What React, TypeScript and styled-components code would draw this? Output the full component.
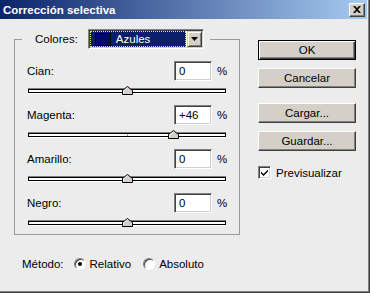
import styled, { createGlobalStyle } from "styled-components";

const GlobalStyle = createGlobalStyle`
  html, body {
    margin: 0;
    padding: 0;
    background: #ececec;
  }
  body {
    font-family: "Liberation Sans", Arial, sans-serif;
    font-size: 11.5px;
    color: #000;
  }
`;

const Window = styled.div`
  width: 370px;
  height: 293px;
  box-sizing: border-box;
  border-right: 1px solid #404040;
  border-bottom: 1px solid #404040;
  background: #ececec;
`;

const Frame = styled.div`
  height: 100%;
  box-sizing: border-box;
  border-right: 1px solid #808080;
  border-bottom: 1px solid #808080;
  padding-right: 1px;
  display: flex;
  flex-direction: column;
`;

const TitleBar = styled.div`
  height: 19px;
  display: flex;
  align-items: center;
  justify-content: space-between;
  padding: 0 2px 0 3px;
  background: linear-gradient(to right, #0a246a, #a6caf0);
`;

const Title = styled.span`
  color: #fff;
  font-weight: bold;
  font-size: 11.5px;
`;

const CloseButton = styled.div`
  width: 16px;
  height: 14px;
  box-sizing: border-box;
  background: #d4d0c8;
  border: 1px solid;
  border-color: #fff #404040 #404040 #fff;
  box-shadow: inset -1px -1px #808080;
  display: flex;
  align-items: center;
  justify-content: center;
`;

const Body = styled.div`
  display: flex;
  align-items: flex-start;
  padding: 10px 0 0 14px;
`;

const LeftColumn = styled.div`
  display: flex;
  flex-direction: column;
`;

const Group = styled.fieldset`
  width: 226px;
  box-sizing: border-box;
  margin: 0;
  min-width: 0;
  padding: 12px 11px 7px 12px;
  border: 1px solid #9a9a9a;
  display: flex;
  flex-direction: column;
  gap: 10px;
`;

const Legend = styled.legend`
  margin-left: -5px;
  padding: 0 6px 0 13px;
  height: 20px;
  display: flex;
  align-items: center;
  gap: 10px;
`;

const Combo = styled.div`
  width: 116px;
  height: 20px;
  box-sizing: border-box;
  display: flex;
  border: 1px solid;
  border-color: #808080 #fff #fff #808080;
  box-shadow: inset 1px 1px #404040, inset -1px -1px #d4d0c8;
  background: #fff;
  padding: 1px;
`;

const Selected = styled.div`
  flex: 1;
  display: flex;
  align-items: center;
  gap: 5px;
  background: #0a1f6c;
  border: 1px dotted #e8dc8a;
  padding-left: 4px;
  color: #fff;
  margin-right: 1px;
`;

const Swatch = styled.div<{ $color: string }>`
  width: 16px;
  height: 13px;
  box-sizing: border-box;
  border: 1px solid #000;
  background: ${(p) => p.$color};
`;

const DropButton = styled.div`
  width: 15px;
  box-sizing: border-box;
  background: #d4d0c8;
  border: 1px solid;
  border-color: #d4d0c8 #404040 #404040 #d4d0c8;
  box-shadow: inset 1px 1px #fff, inset -1px -1px #808080;
  display: flex;
  align-items: center;
  justify-content: center;
`;

const Row = styled.div`
  display: flex;
  flex-direction: column;
  gap: 4px;
`;

const Line = styled.div`
  height: 20px;
  display: flex;
  align-items: center;
`;

const Label = styled.span`
  flex: 1;
`;

const ValueBox = styled.div`
  width: 38px;
  height: 20px;
  box-sizing: border-box;
  background: #fff;
  border: 1px solid;
  border-color: #808080 #fff #fff #808080;
  box-shadow: inset 1px 1px #404040, inset -1px -1px #d4d0c8;
  padding: 0 0 0 4px;
  display: flex;
  align-items: center;
`;

const Percent = styled.span`
  margin-left: 5px;
  width: 11px;
`;

const SliderArea = styled.div`
  position: relative;
  height: 10px;
  margin: 0 2px 0 1px;
`;

const Track = styled.div`
  position: absolute;
  left: 0;
  right: 0;
  top: 4px;
  height: 4px;
  box-sizing: border-box;
  background: #fff;
  border: 1px solid #000;
  box-shadow: 0 -1px 0 #808080, 0 1px 0 #fff;
  &::after {
    content: "";
    position: absolute;
    left: 50%;
    top: 0;
    width: 1px;
    height: 100%;
    background: #a0a0a0;
  }
`;

const Thumb = styled.svg`
  position: absolute;
  top: 1px;
  width: 11px;
  height: 9px;
  margin-left: -5px;
`;

const MethodRow = styled.div`
  margin-top: 22px;
  padding-left: 8px;
  height: 13px;
  display: flex;
  align-items: center;
`;

const MethodLabel = styled.span`
  margin-right: 10px;
`;

const RadioLabel = styled.label`
  display: flex;
  align-items: center;
  gap: 4px;
  margin-right: 12px;
`;

const RadioDot = styled.span<{ $checked: boolean }>`
  width: 12px;
  height: 12px;
  box-sizing: border-box;
  border-radius: 50%;
  border: 1px solid;
  border-color: #808080 #fff #fff #808080;
  box-shadow: inset 1px 1px #404040;
  background: #fff;
  display: flex;
  align-items: center;
  justify-content: center;
  &::after {
    content: "";
    width: 4px;
    height: 4px;
    border-radius: 50%;
    background: ${(p) => (p.$checked ? "#000" : "transparent")};
  }
`;

const RightColumn = styled.div`
  margin-left: 18px;
  margin-top: 11px;
  width: 98px;
  display: flex;
  flex-direction: column;
`;

const Button = styled.div<{ $default?: boolean; $gap?: number }>`
  height: 20px;
  box-sizing: border-box;
  margin-bottom: ${(p) => p.$gap ?? 8}px;
  background: #d4d0c8;
  display: flex;
  align-items: center;
  justify-content: center;
  border: 1px solid;
  border-color: ${(p) =>
    p.$default ? "#000" : "#fff #404040 #404040 #fff"};
  box-shadow: ${(p) =>
    p.$default
      ? "inset 1px 1px #fff, inset -1px -1px #404040, inset -2px -2px #808080"
      : "inset -1px -1px #808080"};
`;

const CheckRow = styled.label`
  display: flex;
  align-items: center;
  gap: 5px;
`;

const CheckBox = styled.span`
  width: 13px;
  height: 13px;
  box-sizing: border-box;
  background: #fff;
  border: 1px solid;
  border-color: #808080 #fff #fff #808080;
  box-shadow: inset 1px 1px #404040, inset -1px -1px #d4d0c8;
  display: flex;
  align-items: center;
  justify-content: center;
`;

const channels = [
  { name: "Cian:", value: 0 },
  { name: "Magenta:", value: 46 },
  { name: "Amarillo:", value: 0 },
  { name: "Negro:", value: 0 },
];

function SliderThumb() {
  return (
    <Thumb viewBox="0 0 11 9">
      <path d="M0.5 8.5 V4.5 L5.5 0.5 L10.5 4.5 V8.5 Z" fill="#d4d0c8" stroke="#000" />
      <path d="M1.5 7.5 V5 L5.5 1.8" fill="none" stroke="#fff" />
    </Thumb>
  );
}

export default function App() {
  return (
    <>
      <GlobalStyle />
      <Window>
        <Frame>
          <TitleBar>
            <Title>Corrección selectiva</Title>
            <CloseButton>
              <svg width="8" height="7" viewBox="0 0 8 7">
                <path d="M0 0h2l2 2 2-2h2L5 3.5 8 7H6L4 5 2 7H0l3-3.5z" fill="#000" />
              </svg>
            </CloseButton>
          </TitleBar>
          <Body>
            <LeftColumn>
              <Group>
                <Legend>
                  <span>Colores:</span>
                  <Combo>
                    <Selected>
                      <Swatch $color="#000a6e" />
                      <span>Azules</span>
                    </Selected>
                    <DropButton>
                      <svg width="7" height="4" viewBox="0 0 7 4">
                        <path d="M0 0h7L3.5 4z" fill="#000" />
                      </svg>
                    </DropButton>
                  </Combo>
                </Legend>
                {channels.map((c) => (
                  <Row key={c.name}>
                    <Line>
                      <Label>{c.name}</Label>
                      <ValueBox>{c.value > 0 ? `+${c.value}` : c.value}</ValueBox>
                      <Percent>%</Percent>
                    </Line>
                    <SliderArea>
                      <Track />
                      <div style={{ position: "absolute", top: 0, left: `${(c.value + 100) / 2}%` }}>
                        <SliderThumb />
                      </div>
                    </SliderArea>
                  </Row>
                ))}
              </Group>
              <MethodRow>
                <MethodLabel>Método:</MethodLabel>
                <RadioLabel>
                  <RadioDot $checked />
                  Relativo
                </RadioLabel>
                <RadioLabel>
                  <RadioDot $checked={false} />
                  Absoluto
                </RadioLabel>
              </MethodRow>
            </LeftColumn>
            <RightColumn>
              <Button $default>OK</Button>
              <Button $gap={15}>Cancelar</Button>
              <Button>Cargar...</Button>
              <Button $gap={15}>Guardar...</Button>
              <CheckRow>
                <CheckBox>
                  <svg width="7" height="7" viewBox="0 0 7 7">
                    <path d="M0 2.5l2.5 2.5L7 0.5V2.5L2.5 7 0 4.5z" fill="#000" />
                  </svg>
                </CheckBox>
                Previsualizar
              </CheckRow>
            </RightColumn>
          </Body>
        </Frame>
      </Window>
    </>
  );
}
